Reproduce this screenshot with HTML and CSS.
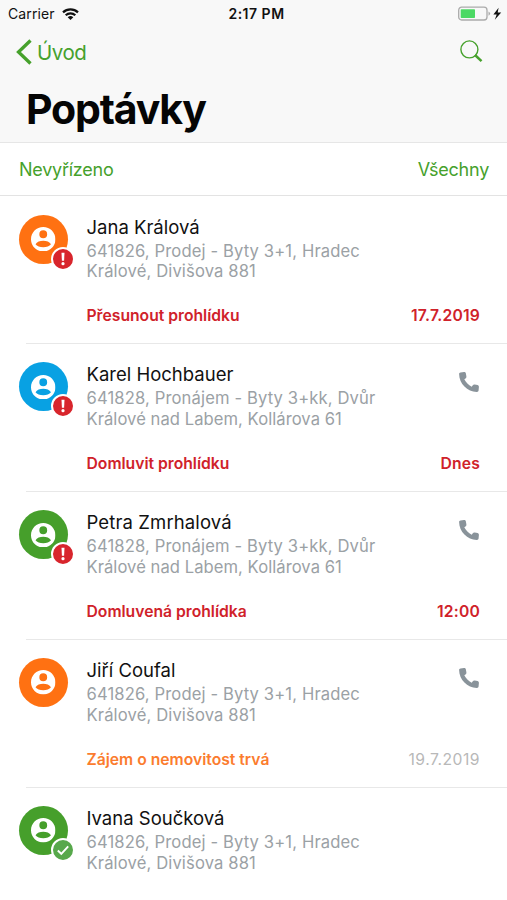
FILE: index.html
```html
<!DOCTYPE html>
<html lang="cs">
<head>
<meta charset="utf-8">
<title>Poptávky</title>
<link rel="stylesheet" href="styles.css">
</head>
<body>
<svg width="0" height="0" class="defs">
  <symbol id="person" viewBox="2 2 20 20"><path d="M12 2C6.480 2 2 6.480 2 12s4.480 10 10 10 10-4.480 10-10S17.520 2 12 2zm0 2.700a3.200 3.200 0 0 1 0 6.400a3.200 3.200 0 0 1 0-6.400zM12 18.500c-2.800 0-5.100-.9-6.300-2.500 1-1.900 3.700-2.800 6.300-2.800s5.300.9 6.300 2.800c-1.200 1.600-3.500 2.500-6.300 2.500z"/></symbol>
  <symbol id="phone" viewBox="0 0 20 20"><path d="M1.500.4L5 .1c1 0 1.600.5 1.900 1.400l.5 2.900c.1.900-.2 1.500-.9 2l-1.200.9c1.700 3.300 4.100 5.700 7.400 7.400l.9-1.200c.5-.7 1.200-1 2.100-.9l2.800.5c.9.300 1.400.9 1.400 1.800l-.3 3.400c-.1 1-.7 1.600-1.700 1.600C8.500 20 .2 12 .1 2.100.1 1.100.6.500 1.500.4z"/></symbol>
  <symbol id="alert" viewBox="0 0 20 20"><path d="M8.500 3.700h3l-.4 8H8.900z"/><circle cx="10" cy="14.700" r="1.600"/></symbol>
  <symbol id="check" viewBox="0 0 20 20"><path d="M4.800 10.500l3.500 3.300 6.900-7.400" fill="none" stroke="#fff" stroke-width="1.900"/></symbol>
</svg>
<header class="header">
  <div class="status">
    <div class="carrier"><span>Carrier</span>
      <svg class="wifi" viewBox="0 0 17 12"><g fill="none" stroke="#111" stroke-width="2.200"><path d="M1 4.400a11 11 0 0 1 15 0"/><path d="M3.700 7.300a7 7 0 0 1 9.600 0"/></g><path d="M5.700 9.300a4 4 0 0 1 5.600 0L8.500 12z" fill="#111"/></svg>
    </div>
    <div class="clock">2:17 PM</div>
    <svg class="battery" viewBox="0 0 44 16"><rect x=".7" y="1.200" width="28.300" height="12.800" rx="3" fill="none" stroke="#aaa" stroke-width="1.300"/><rect x="2.700" y="3.300" width="14.300" height="8.700" rx=".8" fill="#4cd964"/><path d="M30.500 5.400q1.600.8 1.600 2.200t-1.600 2.200z" fill="#aaa"/><path d="M40.600 1.800L35.400 8.400h3.300l-1.900 5.400L43.200 6.600h-3.500z" fill="#111"/></svg>
  </div>
  <nav class="nav">
    <a class="back"><svg viewBox="0 0 16 26"><path d="M14.500 1.500L2.500 13l12 11.500" fill="none" stroke="#46a12c" stroke-width="3.300"/></svg><span>Úvod</span></a>
    <svg class="search" viewBox="0 0 23 23"><circle cx="9.400" cy="9.400" r="8.500" fill="none" stroke="#46a12c" stroke-width="1.400"/><path d="M15 15l6.500 6.200" stroke="#46a12c" stroke-width="2.500"/></svg>
  </nav>
  <h1>Poptávky</h1>
</header>
<div class="filters"><a class="pending">Nevyřízeno</a><a class="all">Všechny</a></div>
<main>
  <article class="row">
    <div class="avatar orange"><svg class="person"><use href="#person"/></svg><div class="badge red"><svg><use href="#alert"/></svg></div></div>
    <div class="body">
      <h2>Jana Králová</h2>
      <p>641826, Prodej - Byty 3+1, Hradec<br>Králové, Divišova 881</p>
      <div class="task late"><span>Přesunout prohlídku</span><time>17.7.2019</time></div>
    </div>
  </article>
  <article class="row">
    <div class="avatar blue"><svg class="person"><use href="#person"/></svg><div class="badge red"><svg><use href="#alert"/></svg></div></div>
    <div class="body">
      <h2>Karel Hochbauer</h2>
      <p>641828, Pronájem - Byty 3+kk, Dvůr<br><span class="tight">Králové nad Labem, Kollárova 61</span></p>
      <div class="task late"><span>Domluvit prohlídku</span><time>Dnes</time></div>
      <svg class="phone"><use href="#phone"/></svg>
    </div>
  </article>
  <article class="row">
    <div class="avatar green"><svg class="person"><use href="#person"/></svg><div class="badge red"><svg><use href="#alert"/></svg></div></div>
    <div class="body">
      <h2 class="wide">Petra Zmrhalová</h2>
      <p>641828, Pronájem - Byty 3+kk, Dvůr<br><span class="tight">Králové nad Labem, Kollárova 61</span></p>
      <div class="task late"><span>Domluvená prohlídka</span><time>12:00</time></div>
      <svg class="phone"><use href="#phone"/></svg>
    </div>
  </article>
  <article class="row">
    <div class="avatar orange"><svg class="person"><use href="#person"/></svg></div>
    <div class="body">
      <h2>Jiří Coufal</h2>
      <p>641826, Prodej - Byty 3+1, Hradec<br>Králové, Divišova 881</p>
      <div class="task open"><span>Zájem o nemovitost trvá</span><time>19.7.2019</time></div>
      <svg class="phone"><use href="#phone"/></svg>
    </div>
  </article>
  <article class="row">
    <div class="avatar green"><svg class="person"><use href="#person"/></svg><div class="badge done"><svg><use href="#check"/></svg></div></div>
    <div class="body">
      <h2>Ivana Součková</h2>
      <p>641826, Prodej - Byty 3+1, Hradec<br>Králové, Divišova 881</p>
    </div>
  </article>
</main>
</body>
</html>
```
FILE: styles.css
```css
* { box-sizing: border-box; margin: 0; padding: 0; }
html, body { height: 900px; overflow: hidden; }
body { width: 507px; background: #fff; color: #111; font-family: Inter, "Liberation Sans", sans-serif; }
svg { display: block; }
.defs { position: absolute; }
.header { height: 143px; background: #f8f8f8; border-bottom: 1px solid #e6e6e6; }
.status { height: 27px; display: grid; grid-template-columns: 1fr auto 1fr; align-items: center; padding: 0 5px 0 8px; font-size: 14px; }
.carrier { display: flex; align-items: center; gap: 7px; letter-spacing: .1px; }
.wifi { width: 17px; height: 12px; }
.clock { font-weight: 600; letter-spacing: .5px; padding-left: 3px; }
.battery { width: 44px; height: 16px; justify-self: end; }
.nav { height: 50px; display: flex; justify-content: space-between; align-items: center; padding: 0 24px 0 16px; color: #46a12c; }
.back { display: flex; align-items: center; gap: 5px; font-size: 20.500px; letter-spacing: -.5px; }
.back svg { width: 16px; height: 26px; }
.search { width: 23px; height: 23px; margin-bottom: 1px; }
h1 { font-size: 41px; line-height: 50px; font-weight: 700; letter-spacing: -1.150px; padding-left: 26px; margin-top: 7px; color: #050505; }
.filters { height: 53px; display: flex; justify-content: space-between; align-items: center; padding: 0 18px 0 19px; border-bottom: 1px solid #e3e3e3; font-size: 18px; letter-spacing: -.25px; color: #46a12c; }
.row { height: 147.900px; display: flex; padding: 18.500px 0 0 19px; }
.avatar { position: relative; flex: none; width: 49px; height: 49px; border-radius: 50%; display: grid; place-items: center; }
.orange { background: #ff7112; }
.blue { background: #08a1e3; }
.green { background: #469f2b; }
.person { width: 24.500px; height: 24.500px; fill: #fff; }
.badge { position: absolute; left: 32px; top: 32px; width: 24px; height: 24px; border: 2px solid #fff; border-radius: 50%; }
.badge svg { width: 20px; height: 20px; fill: #fff; }
.red { background: #d8252c; }
.done { background: #57a84b; }
.body { position: relative; flex: 1; margin-left: 18.500px; height: 129.400px; }
.row:not(:last-child) .body::after { content: ""; position: absolute; left: -61px; right: 0; bottom: 0; height: 1px; background: #e8e8e8; }
h2 { font-size: 18.500px; line-height: 24px; font-weight: 400; color: #111; }
.wide { letter-spacing: .12px; }
p { font-size: 16.600px; line-height: 20.500px; letter-spacing: .13px; color: #9ba1a5; margin-top: 2px; white-space: nowrap; }
.tight { letter-spacing: .05px; }
.task { display: flex; justify-content: space-between; padding-right: 27px; margin-top: 24.700px; font-size: 15.700px; line-height: 20px; font-weight: 600; }
.task time { letter-spacing: .2px; }
.late { color: #d0222a; }
.open { color: #fb7c2e; }
.open time { color: #b8b8b8; font-weight: 400; letter-spacing: .5px; }
.phone { position: absolute; right: 28px; top: 10px; width: 20px; height: 20px; fill: #89939a; }
```
